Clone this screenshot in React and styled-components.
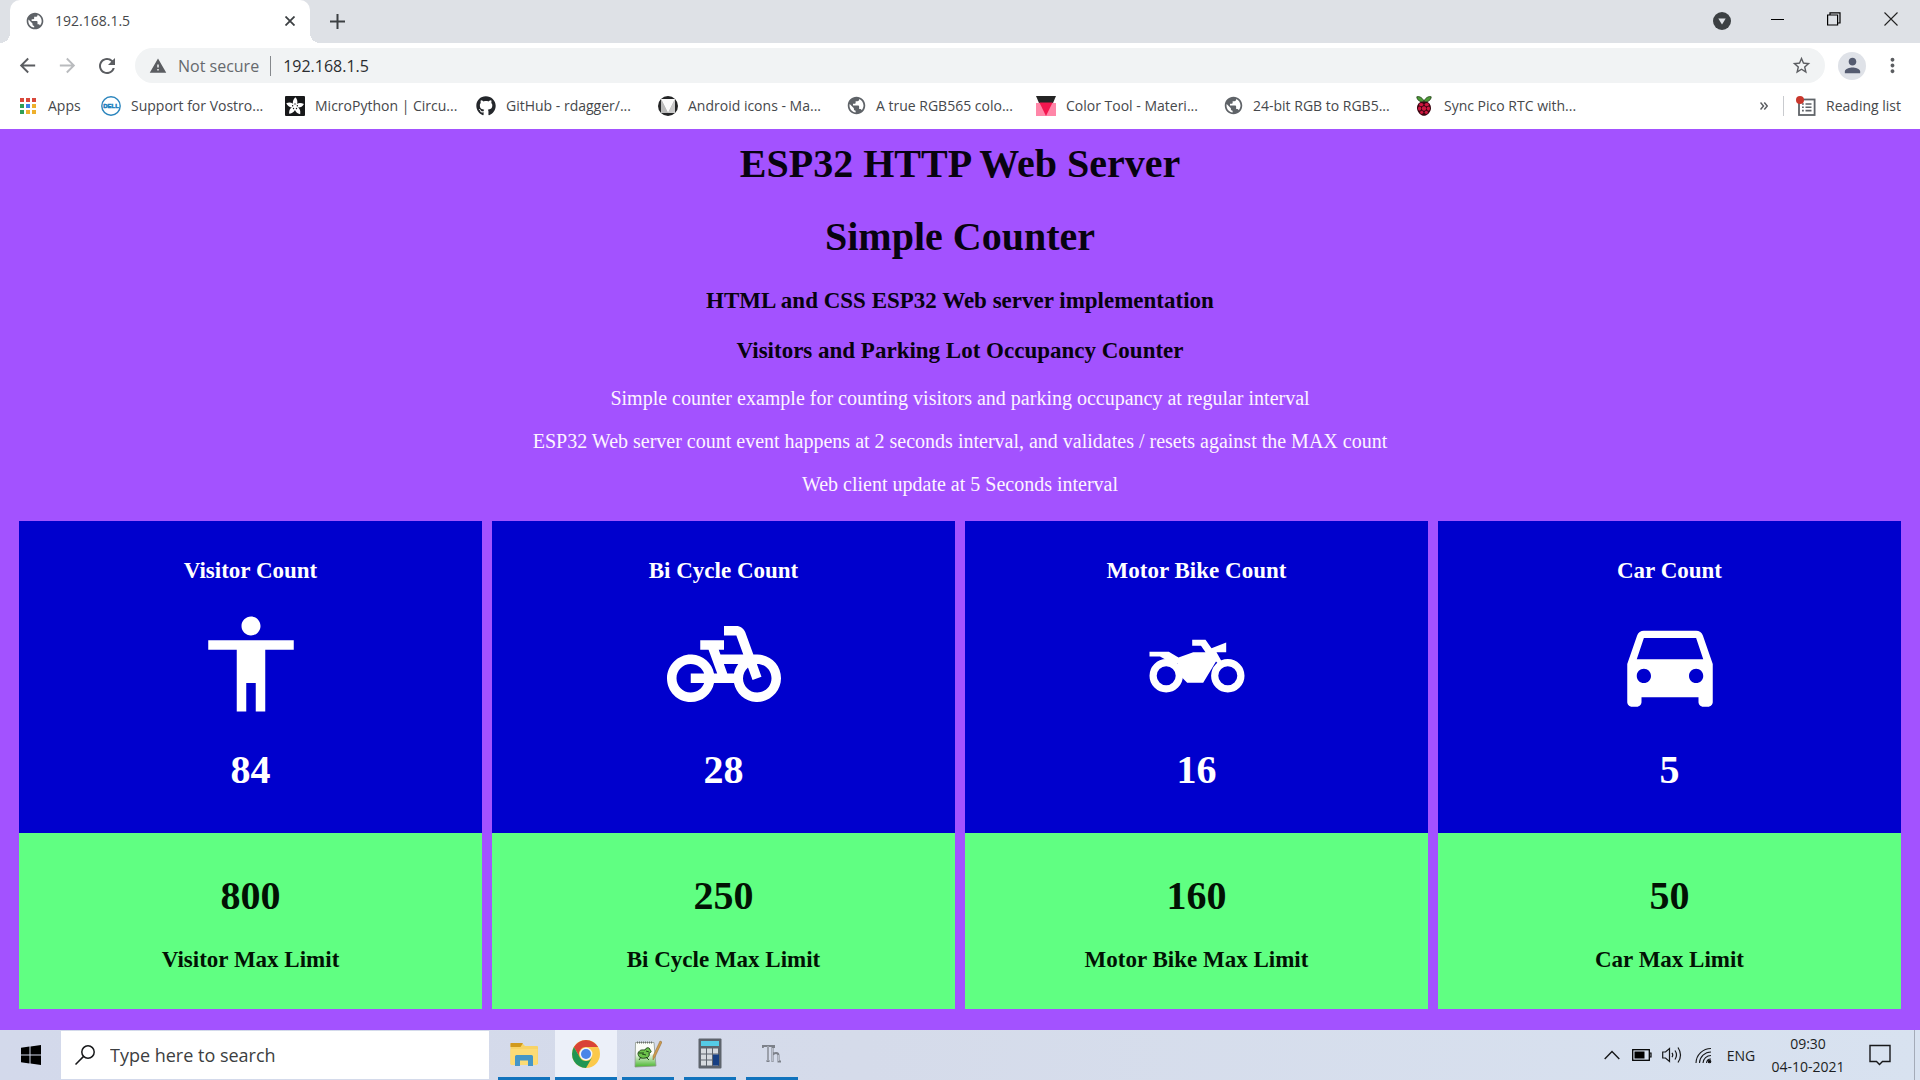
import React from "react";
import styled, { createGlobalStyle } from "styled-components";
import {
  MdPublic,
  MdArrowBack,
  MdArrowForward,
  MdRefresh,
  MdWarning,
  MdStarBorder,
  MdPerson,
  MdMoreVert,
  MdAccessibility,
  MdDirectionsCar,
} from "react-icons/md";
import { FaGithub } from "react-icons/fa";

const GlobalStyle = createGlobalStyle`
  *, *::before, *::after { box-sizing: border-box; }
  html, body { margin: 0; padding: 0; }
  body { background: #a352ff; }
  button, input { font: inherit; color: inherit; border: 0; background: none; padding: 0; margin: 0; outline: none; }
  svg { display: block; flex: none; }
`;

const uiFont = `"Open Sans", "Noto Sans", sans-serif`;
const pageFont = `"Liberation Serif", "Times New Roman", serif`;

const Shell = styled.div`
  min-height: 100vh;
  display: flex;
  flex-direction: column;
  font-family: ${uiFont};
  color: #46484b;
`;

/* ---------- browser frame ---------- */

const TabStrip = styled.div`
  display: flex;
  height: 43px;
  padding-left: 10px;
  background: #dee1e6;
`;

const Tab = styled.div`
  position: relative;
  display: flex;
  align-items: center;
  gap: 10px;
  width: 300px;
  padding: 0 12px 2px 15px;
  background: #fff;
  border-radius: 10px 10px 0 0;
  font-size: 14px;

  &::before,
  &::after {
    content: "";
    position: absolute;
    bottom: 0;
    width: 10px;
    height: 10px;
  }
  &::before {
    right: 100%;
    background: radial-gradient(circle at 0 0, #dee1e6 10px, #fff 10px);
  }
  &::after {
    left: 100%;
    background: radial-gradient(circle at 100% 0, #dee1e6 10px, #fff 10px);
  }
`;

const TabTitle = styled.span`
  flex: 1;
`;

const IconButton = styled.button`
  display: flex;
  align-items: center;
  justify-content: center;
  flex: none;
  width: ${(p) => p.$w || 40}px;
  height: ${(p) => p.$h || 35}px;
  color: ${(p) => p.$color || "#5b5d61"};
`;

const WindowControls = styled.div`
  display: flex;
  align-items: flex-start;
  margin-left: auto;
`;

const Toolbar = styled.div`
  display: flex;
  align-items: center;
  height: 45px;
  padding: 0 8px 0 7px;
  background: #fff;
`;

const AddressBar = styled.label`
  display: flex;
  flex: 1;
  align-items: center;
  height: 35px;
  margin: 0 7px 0 8px;
  padding: 0 4px 0 14px;
  border-radius: 18px;
  background: #f1f3f4;
  font-size: 16px;
  color: #66696d;
`;

const SecurityNote = styled.span`
  margin-left: 11px;
  padding-right: 11px;
  border-right: 1px solid #85888c;
  line-height: 20px;
`;

const AddressInput = styled.input`
  flex: 1;
  margin-left: 12px;
  color: #2b2d30;
`;

const Avatar = styled.span`
  display: flex;
  align-items: center;
  justify-content: center;
  width: 28px;
  height: 28px;
  border-radius: 50%;
  background: #dfe2e8;
  color: #545b70;
`;

const Bookmarks = styled.nav`
  display: flex;
  align-items: center;
  height: 41px;
  padding: 0 19px 6px 18px;
  background: #fff;
  font-size: 14px;
`;

const Bookmark = styled.a`
  display: flex;
  align-items: center;
  gap: 10px;
  flex: none;
  width: ${(p) => (p.$w ? `${p.$w}px` : "auto")};
  color: #46484b;
  text-decoration: none;
  white-space: nowrap;
`;

const BookmarkIcon = styled.span`
  display: flex;
  align-items: center;
  justify-content: center;
  width: 20px;
  height: 20px;
  color: #5f6368;
`;

const BookmarkEnd = styled.div`
  display: flex;
  align-items: center;
  margin-left: auto;
`;

const Divider = styled.span`
  width: 1px;
  height: 20px;
  margin: 0 12px 0 14px;
  background: #c9cbcf;
`;

/* ---------- counter page ---------- */

const Page = styled.main`
  flex: 1;
  padding: 12px 19px 21px;
  background: #a352ff;
  font-family: ${pageFont};
  text-align: center;
`;

const Title = styled.h1`
  margin: 0 0 27px;
  font-size: 40px;
  line-height: 46px;
  color: #080310;
`;

const Subtitle = styled.h3`
  margin: 0 0 23px;
  font-size: 23px;
  line-height: 27px;
  color: #080310;
`;

const Lead = styled.p`
  margin: 0 0 20px;
  font-size: 20px;
  line-height: 23px;
  color: #fdf4ff;
`;

const Cards = styled.div`
  display: grid;
  grid-template-columns: repeat(4, 1fr);
  gap: 10px;
  padding-top: 5px;
`;

const Card = styled.section`
  display: flex;
  flex-direction: column;
`;

const CountPanel = styled.div`
  display: flex;
  flex-direction: column;
  align-items: center;
  padding: 36px 10px 40px;
  background: #0000cd;
  color: #fff;
`;

const LimitPanel = styled.div`
  padding: 40px 10px 36px;
  background: #60ff82;
  color: #021204;
`;

const CardLabel = styled.h3`
  margin: 0;
  font-size: 23px;
  line-height: 27px;
`;

const CardValue = styled.div`
  font-size: 40px;
  font-weight: 700;
  line-height: 46px;
`;

const CardIcon = styled.div`
  margin: 23px 0 26px;
`;

const LimitValue = styled(CardValue)`
  margin-bottom: 27px;
`;

/* ---------- taskbar ---------- */

const Taskbar = styled.footer`
  display: flex;
  height: 50px;
  background: linear-gradient(90deg, #d3d9eb, #d5dbea 45%, #d8e2f0);
  color: #1c1e22;
`;

const SearchBox = styled.label`
  display: flex;
  align-items: center;
  gap: 15px;
  width: 428px;
  margin: 1px 4px 1px 0;
  padding-left: 14px;
  background: #fff;
`;

const SearchInput = styled.input`
  flex: 1;
  font-size: 18px;
  &::placeholder {
    color: #3c3e41;
    opacity: 1;
  }
`;

const TaskButton = styled.button`
  display: flex;
  flex-direction: column;
  align-items: center;
  width: 62px;
  padding: ${(p) => (p.$active ? "0" : "0 5px")};
  background: ${(p) => (p.$active ? "#ecf0f9" : "transparent")};

  &::after {
    content: "";
    width: 100%;
    height: 3px;
    background: #1173bd;
  }
`;

const TaskIcon = styled.span`
  display: flex;
  flex: 1;
  align-items: center;
`;

const Tray = styled.div`
  display: flex;
  align-items: center;
  margin-left: auto;
  font-size: 14px;
`;

const TrayButton = styled.button`
  display: flex;
  align-items: center;
  justify-content: center;
  width: ${(p) => p.$w}px;
  height: 50px;
`;

const Clock = styled.time`
  width: 90px;
  text-align: center;
  line-height: 23px;
`;

const ShowDesktop = styled.button`
  width: 6px;
  height: 50px;
  margin-left: 7px;
  border-left: 1px solid #a4abb8;
`;

/* ---------- drawings ---------- */

const AppsGrid = () => {
  const colors = ["#d9483b", "#d9483b", "#d9483b", "#2f9e56", "#3b80e8", "#eeb02c", "#2f9e56", "#eeb02c", "#eeb02c"];
  return (
    <svg width="18" height="18" viewBox="0 0 18 18">
      {colors.map((c, i) => (
        <rect key={i} x={1 + (i % 3) * 6} y={1 + Math.floor(i / 3) * 6} width="4" height="4" fill={c} />
      ))}
    </svg>
  );
};

const DellLogo = () => (
  <svg width="20" height="20" viewBox="0 0 20 20">
    <circle cx="10" cy="10" r="9.200" fill="#fff" stroke="#2b85bd" strokeWidth="1.400" />
    <text x="10" y="12.400" textAnchor="middle" fontFamily="Liberation Sans, sans-serif" fontWeight="700" fontSize="6" fill="#1b7fc0" stroke="#1b7fc0" strokeWidth="0.500">
      DELL
    </text>
  </svg>
);

const AdafruitLogo = () => (
  <svg width="20" height="20" viewBox="0 0 20 20">
    <rect width="20" height="20" rx="1" fill="#17181a" />
    <g fill="#fff">
      {[0, 72, 144, 216, 288].map((a) => (
        <path key={a} transform={`rotate(${a} 10 10.5)`} d="M10 11C6.600 7.500 7.600 4 10.400 1.200C13 4 13.200 7.500 10 11z" />
      ))}
    </g>
    {[0, 72, 144, 216, 288].map((a) => (
      <circle key={a} transform={`rotate(${a} 10 10.5)`} cx="10" cy="8" r="0.700" fill="#17181a" />
    ))}
  </svg>
);

const MaterialLogo = () => (
  <svg width="20" height="20" viewBox="0 0 20 20">
    <circle cx="10" cy="10" r="10" fill="#242526" />
    <path d="M3 3h14v14H3z" fill="#a6a6a6" />
    <path d="M3 3h14L10 17z" fill="#fafafa" />
    <path d="M3 3v14h7z" fill="#b9b9b9" />
    <path d="M17 3v14h-7z" fill="#c9c9c9" />
  </svg>
);

const ColorToolLogo = () => (
  <svg width="20" height="20" viewBox="0 0 20 20">
    <path d="M0 7h20v13H0z" fill="#ff86a8" />
    <path d="M0 0h20l-3 7H3z" fill="#242424" />
    <path d="M3.400 6.600h13.200L10 20z" fill="#f3174f" />
  </svg>
);

const RaspberryLogo = () => (
  <svg width="20" height="20" viewBox="0 0 20 20">
    <path d="M10 5C8 1 4.500 0 2.800 0.800C3 4 5.500 6 10 6C14.500 6 17 4 17.200 0.800C15.500 0 12 1 10 5z" fill="#4c9a35" stroke="#1d3915" strokeWidth="0.800" />
    <path d="M10 5.500C5.500 5 2.800 8.500 3 12.500C3.400 16.500 7 19.800 10 19.800C13 19.800 16.600 16.500 17 12.500C17.200 8.500 14.500 5 10 5.500z" fill="#3d0612" />
    <g fill="#cf1740">
      <circle cx="10" cy="12.500" r="2.200" />
      <ellipse cx="7.200" cy="8.600" rx="2.200" ry="1.700" />
      <ellipse cx="12.800" cy="8.600" rx="2.200" ry="1.700" />
      <ellipse cx="5.600" cy="12.600" rx="1.600" ry="2.100" />
      <ellipse cx="14.400" cy="12.600" rx="1.600" ry="2.100" />
      <circle cx="7.700" cy="16.300" r="1.600" />
      <circle cx="12.300" cy="16.300" r="1.600" />
    </g>
  </svg>
);

const ReadingListIcon = () => (
  <svg width="20" height="20" viewBox="0 0 20 20" fill="none">
    <rect x="3" y="3.500" width="15.600" height="15.500" stroke="#5f6368" strokeWidth="1.800" />
    <path d="M6 8h1.800M6 11.300h1.800M6 14.600h1.800M9.500 8h6M9.500 11.300h6M9.500 14.600h6" stroke="#5f6368" strokeWidth="1.600" />
    <circle cx="4" cy="4" r="4" fill="#c9372c" />
  </svg>
);

const BikeIcon = () => (
  <svg width="114" height="114" viewBox="0 0 24 24" fill="currentColor">
    <path d="M18.18,10l-1.7-4.68C16.19,4.53,15.44,4,14.6,4H12v2h2.6l1.46,4h-4.81l-0.36-1H12V7H7v2h1.75l1.82,5H9.9c-0.44-2.23-2.31-3.88-4.65-3.99C2.45,9.87,0,12.2,0,15c0,2.8,2.2,5,5,5c2.46,0,4.45-1.69,4.9-4h4.2c0.44,2.23,2.31,3.88,4.65,3.99c2.8,0.13,5.25-2.19,5.25-5c0-2.8-2.2-5-5-5H18.18z M7.82,16c-0.4,1.17-1.49,2-2.82,2c-1.68,0-3-1.32-3-3s1.32-3,3-3c1.33,0,2.42,0.83,2.82,2H5v2H7.82z M14.1,14h-1.4l-0.73-2H15C14.56,12.58,14.24,13.25,14.1,14z M19,18c-1.68,0-3-1.32-3-3c0-0.93,0.41-1.73,1.05-2.28l0.96,2.64l1.88-0.68l-0.97-2.67C18.94,12.01,18.97,12,19,12c1.68,0,3,1.32,3,3S20.68,18,19,18z" />
  </svg>
);

const MotorBikeIcon = () => (
  <svg width="114" height="114" viewBox="0 0 114 114">
    <path
      fill="currentColor"
      d="M9.500 44.800H28.800L38.500 50.500L53.200 45.200H65.500L61 38.800H52.200V32.800H65.500L71.500 41.200L86.200 35.500V45.200H76.500L82 55L78.500 57L76 54.500L63.200 75.800H47.200L41 69.500L37.500 56.500L28 54L20 49.500H9.500z"
    />
    <circle cx="26.200" cy="68.800" r="13.100" fill="none" stroke="currentColor" strokeWidth="7.200" />
    <circle cx="87.800" cy="68.800" r="13.100" fill="none" stroke="currentColor" strokeWidth="7.200" />
  </svg>
);

const WindowsLogo = () => (
  <svg width="20" height="20" viewBox="0 0 20 20" fill="#000">
    <path d="M0 2.700L8.500 1.500V9.500H0zM9.500 1.400L20 0V9.500H9.500zM0 10.500H8.500V18.500L0 17.300zM9.500 10.500H20V20L9.500 18.600z" />
  </svg>
);

const SearchIcon = () => (
  <svg width="20" height="20" viewBox="0 0 20 20" fill="none" stroke="#17181a" strokeWidth="1.500">
    <circle cx="13" cy="7" r="6.200" />
    <path d="M8.600 11.400L0.500 19.500" />
  </svg>
);

const FolderIcon = () => (
  <svg width="28" height="26" viewBox="0 0 28 26">
    <path d="M0.500 3h12.500l2 2h12a1 1 0 0 1 1 1v17H0.500z" fill="#f8d366" />
    <path d="M0.500 2h12.500l-2.500 4H0.500z" fill="#d19a1d" />
    <path d="M0.500 8h27v15a1 1 0 0 1-1 1h-25a1 1 0 0 1-1-1z" fill="#fcdb75" />
    <path d="M5 25V15.500a1.500 1.500 0 0 1 1.500-1.500h15a1.500 1.500 0 0 1 1.500 1.500V25h-5v-5.500h-8V25z" fill="#4596c7" />
  </svg>
);

const ChromeIcon = () => (
  <svg width="28" height="28" viewBox="0 0 28 28">
    <circle cx="14" cy="14" r="14" fill="#fbc94b" />
    <path d="M1.900 7A14 14 0 0 1 26.100 7H14A7 7 0 0 0 7.900 17.500z" fill="#d94336" />
    <path d="M1.900 7A14 14 0 0 0 14 28L20.100 17.500A7 7 0 0 1 7.900 17.500z" fill="#219653" />
    <circle cx="14" cy="14" r="6.400" fill="#f2f5fb" />
    <circle cx="14" cy="14" r="5" fill="#4a85e8" />
  </svg>
);

const NotepadIcon = () => (
  <svg width="28" height="28" viewBox="0 0 28 28">
    <defs>
      <linearGradient id="paper" x1="0" y1="0" x2="0" y2="1">
        <stop offset="0.450" stopColor="#fafcf7" />
        <stop offset="1" stopColor="#48b52d" />
      </linearGradient>
    </defs>
    <path d="M1.500 2.500L20 2.500L22 26L1 27z" fill="url(#paper)" stroke="#8d978d" strokeWidth="0.800" />
    <path d="M3 2.500h16" stroke="#6c706c" strokeWidth="2" strokeDasharray="1 1" />
    <path d="M4 13c2-4 5-3 7-3c1-3 5-3 5 0c2 1 1 3-1 3c1 3-1 5-4 5c-4 1-7-1-7-5z" fill="#6cc24a" stroke="#22471b" />
    <path d="M5 13h5M12 11l3 1M7 17l-2 3M12 17l3 3M8 14l4 1" stroke="#22471b" fill="none" />
    <path d="M26 1l2 1l-7 15l-2 3l0-4z" fill="#cf9a4c" stroke="#8b6a36" strokeWidth="0.500" />
  </svg>
);

const CalculatorIcon = () => (
  <svg width="24" height="31" viewBox="0 0 24 31">
    <rect x="0.500" y="0.500" width="23" height="30" rx="1" fill="#5e646d" />
    <rect x="3" y="3" width="18" height="5" fill="#55cbe6" />
    {[3, 9, 15].map((x) =>
      [10.5, 16.5, 22.5].map((y) => <rect key={`${x}-${y}`} x={x} y={y} width="5" height="5" fill="#d6dadf" />)
    )}
    <rect x="15" y="16.500" width="6" height="11" fill="#173f83" />
  </svg>
);

const ThonnyIcon = () => (
  <svg width="20" height="20" viewBox="0 0 20 20" fill="none" stroke="#7d818a" strokeWidth="2">
    <path d="M0.800 4V2h11.200v2M6 2.500V16.500M4.500 17h3M10.500 3V18M10.500 11c2-3 6-2.500 6 0.500v6h2.500" />
    <path d="M6 2V17M10.500 4V17.500M16.500 11v6" stroke="#d5dae6" strokeWidth="0.700" />
  </svg>
);

const ChevronUp = () => (
  <svg width="16" height="10" viewBox="0 0 16 10" fill="none" stroke="#17181a" strokeWidth="1.400">
    <path d="M0.700 9L8 1.500L15.300 9" />
  </svg>
);

const BatteryIcon = () => (
  <svg width="20" height="12" viewBox="0 0 20 12">
    <rect x="0.700" y="0.700" width="16.600" height="10.600" fill="none" stroke="#000" strokeWidth="1.300" />
    <rect x="2.500" y="2.500" width="10" height="7" fill="#000" />
    <path d="M18 4h1v4h-1" fill="none" stroke="#000" strokeWidth="1.200" />
  </svg>
);

const SpeakerIcon = () => (
  <svg width="20" height="18" viewBox="0 0 20 18" fill="none" stroke="#17181a" strokeWidth="1.200">
    <path d="M0.700 6h2.800L7.500 2.500v13L3.500 12H0.700z" />
    <path d="M10 6.800q1.500 2.200 0 4.400M13 4.500q3 4.500 0 9M16 1.500q5 7.500 0 15" />
  </svg>
);

const WifiIcon = () => (
  <svg width="17" height="17" viewBox="0 0 17 17" fill="none" stroke="#17181a" strokeWidth="1.100">
    <path d="M1 16A15 15 0 0 1 16 1.500M4.500 16A11.500 11.500 0 0 1 16 5M8 16A8 8 0 0 1 16 8.500M11.500 16A4.500 4.500 0 0 1 16 12" />
    <circle cx="14.500" cy="14.500" r="1.300" fill="#000" />
  </svg>
);

const NotificationIcon = () => (
  <svg width="22" height="22" viewBox="0 0 22 22" fill="none" stroke="#17181a" strokeWidth="1.400">
    <path d="M1 1.500H21V17.500H13.500L10.500 20.500L7.500 17.500H1z" />
  </svg>
);

/* ---------- data ---------- */

const bookmarks = [
  { label: "Apps", width: 83, icon: <AppsGrid /> },
  { label: "Support for Vostro...", width: 184, icon: <DellLogo /> },
  { label: "MicroPython | Circu...", width: 191, icon: <AdafruitLogo /> },
  { label: "GitHub - rdagger/...", width: 182, icon: <FaGithub size={20} color="#24272b" /> },
  { label: "Android icons - Ma...", width: 188, icon: <MaterialLogo /> },
  { label: "A true RGB565 colo...", width: 190, icon: <MdPublic size={21} /> },
  { label: "Color Tool - Materi...", width: 187, icon: <ColorToolLogo /> },
  { label: "24-bit RGB to RGB5...", width: 191, icon: <MdPublic size={21} /> },
  { label: "Sync Pico RTC with...", width: 170, icon: <RaspberryLogo /> },
];

const counters = [
  { name: "Visitor", count: 84, limit: 800, icon: <MdAccessibility size={114} /> },
  { name: "Bi Cycle", count: 28, limit: 250, icon: <BikeIcon /> },
  { name: "Motor Bike", count: 16, limit: 160, icon: <MotorBikeIcon /> },
  { name: "Car", count: 5, limit: 50, icon: <MdDirectionsCar size={114} /> },
];

const tasks = [
  { name: "File Explorer", icon: <FolderIcon /> },
  { name: "Chrome", icon: <ChromeIcon />, active: true },
  { name: "Notepad++", icon: <NotepadIcon /> },
  { name: "Calculator", icon: <CalculatorIcon /> },
  { name: "Thonny", icon: <ThonnyIcon /> },
];

export default function App() {
  return (
    <Shell>
      <GlobalStyle />
      <header>
        <TabStrip>
          <Tab>
            <MdPublic size={20} color="#5f6368" />
            <TabTitle>192.168.1.5</TabTitle>
            <IconButton $w={16} $h={16} $color="#3c4043" aria-label="Close tab">
              <svg width="10" height="10" viewBox="0 0 10 10" stroke="currentColor" strokeWidth="1.800">
                <path d="M0.500 0.500l9 9M9.500 0.500l-9 9" />
              </svg>
            </IconButton>
          </Tab>
          <IconButton $w={54} $h={42} $color="#3c4043" aria-label="New tab">
            <svg width="15" height="15" viewBox="0 0 15 15" stroke="currentColor" strokeWidth="2">
              <path d="M7.500 0v15M0 7.500h15" />
            </svg>
          </IconButton>
          <WindowControls>
            <IconButton $w={54} $h={42} aria-label="Search tabs">
              <svg width="18" height="18" viewBox="0 0 18 18">
                <circle cx="9" cy="9" r="9" fill="#3c4043" />
                <path d="M5.300 6.500h7.400L9 12.500z" fill="#dee1e6" />
              </svg>
            </IconButton>
            <IconButton $w={57} $h={37} $color="#000" aria-label="Minimize">
              <svg width="14" height="14" viewBox="0 0 14 14" stroke="currentColor">
                <path d="M0 7.500h13" />
              </svg>
            </IconButton>
            <IconButton $w={56} $h={37} $color="#000" aria-label="Restore">
              <svg width="14" height="14" viewBox="0 0 14 14" stroke="currentColor" fill="none" strokeWidth="1.200">
                <path d="M0.600 3h10v10h-10zM3 3V0.800h10V11H10.600" />
              </svg>
            </IconButton>
            <IconButton $w={58} $h={37} $color="#222" aria-label="Close window">
              <svg width="14" height="14" viewBox="0 0 14 14" stroke="currentColor" strokeWidth="1.100">
                <path d="M0.500 0.500l13 13M13.500 0.500l-13 13" />
              </svg>
            </IconButton>
          </WindowControls>
        </TabStrip>

        <Toolbar>
          <IconButton aria-label="Back"><MdArrowBack size={23} /></IconButton>
          <IconButton $color="#b9bbbe" aria-label="Forward"><MdArrowForward size={23} /></IconButton>
          <IconButton aria-label="Reload"><MdRefresh size={24} /></IconButton>
          <AddressBar>
            <MdWarning size={18} color="#5b5d61" />
            <SecurityNote>Not secure</SecurityNote>
            <AddressInput aria-label="Address" defaultValue="192.168.1.5" />
            <IconButton aria-label="Bookmark this page"><MdStarBorder size={21} /></IconButton>
          </AddressBar>
          <IconButton aria-label="Profile">
            <Avatar><MdPerson size={23} /></Avatar>
          </IconButton>
          <IconButton aria-label="Menu"><MdMoreVert size={23} /></IconButton>
        </Toolbar>

        <Bookmarks aria-label="Bookmarks">
          {bookmarks.map((b) => (
            <Bookmark key={b.label} href="#" $w={b.width}>
              <BookmarkIcon>{b.icon}</BookmarkIcon>
              {b.label}
            </Bookmark>
          ))}
          <BookmarkEnd>
            <IconButton $w={10} $h={20} aria-label="More bookmarks">
              <svg width="8" height="8" viewBox="0 0 8 8" fill="none" stroke="currentColor" strokeWidth="1.500">
                <path d="M0.500 0.500L3.500 4L0.500 7.500M4.300 0.500L7.300 4L4.300 7.500" />
              </svg>
            </IconButton>
            <Divider />
            <Bookmark href="#">
              <BookmarkIcon><ReadingListIcon /></BookmarkIcon>
              Reading list
            </Bookmark>
          </BookmarkEnd>
        </Bookmarks>
      </header>

      <Page>
        <Title>ESP32 HTTP Web Server</Title>
        <Title>Simple Counter</Title>
        <Subtitle>HTML and CSS ESP32 Web server implementation</Subtitle>
        <Subtitle>Visitors and Parking Lot Occupancy Counter</Subtitle>
        <Lead>Simple counter example for counting visitors and parking occupancy at regular interval</Lead>
        <Lead>ESP32 Web server count event happens at 2 seconds interval, and validates / resets against the MAX count</Lead>
        <Lead>Web client update at 5 Seconds interval</Lead>
        <Cards>
          {counters.map((c) => (
            <Card key={c.name}>
              <CountPanel>
                <CardLabel>{c.name} Count</CardLabel>
                <CardIcon>{c.icon}</CardIcon>
                <CardValue>{c.count}</CardValue>
              </CountPanel>
              <LimitPanel>
                <LimitValue>{c.limit}</LimitValue>
                <CardLabel>{c.name} Max Limit</CardLabel>
              </LimitPanel>
            </Card>
          ))}
        </Cards>
      </Page>

      <Taskbar>
        <TrayButton $w={61} aria-label="Start"><WindowsLogo /></TrayButton>
        <SearchBox>
          <SearchIcon />
          <SearchInput aria-label="Search" placeholder="Type here to search" />
        </SearchBox>
        {tasks.map((t) => (
          <TaskButton key={t.name} $active={t.active} aria-label={t.name}>
            <TaskIcon>{t.icon}</TaskIcon>
          </TaskButton>
        ))}
        <Tray>
          <TrayButton $w={30} aria-label="Show hidden icons"><ChevronUp /></TrayButton>
          <TrayButton $w={30} aria-label="Battery"><BatteryIcon /></TrayButton>
          <TrayButton $w={30} aria-label="Volume"><SpeakerIcon /></TrayButton>
          <TrayButton $w={32} aria-label="Network"><WifiIcon /></TrayButton>
          <TrayButton $w={44}>ENG</TrayButton>
          <Clock>
            09:30
            <br />
            04-10-2021
          </Clock>
          <TrayButton $w={54} aria-label="Notifications"><NotificationIcon /></TrayButton>
          <ShowDesktop aria-label="Show desktop" />
        </Tray>
      </Taskbar>
    </Shell>
  );
}
